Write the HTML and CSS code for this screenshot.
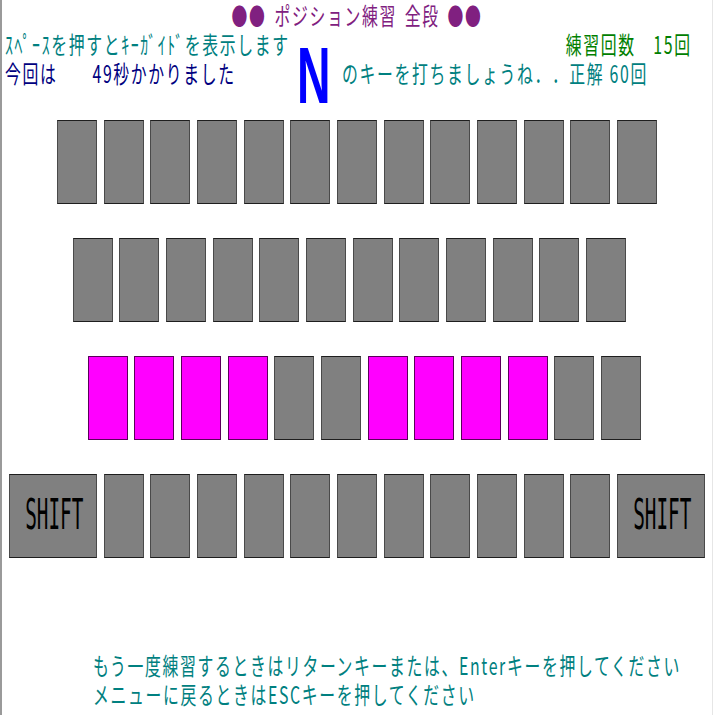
FILE: index.html
```html
<!DOCTYPE html>
<html lang="ja">
<head>
<meta charset="utf-8">
<title>ポジション練習 全段</title>
<link rel="stylesheet" href="styles.css">
</head>
<body>
<div class="screen">
  <header class="top">
    <div class="title"><span class="c mid">●● ポジション練習 全段 ●●</span></div>
    <div class="info">
      <div class="line teal"><span class="c">ｽﾍﾟｰｽを押すとｷｰｶﾞｲﾄﾞを表示します</span></div>
      <div class="bigkey"><span class="n">N</span></div>
      <div class="line green right"><span class="c end">練習回数　15回</span></div>
      <div class="line navy"><span class="c">今回は　　49秒かかりました</span></div>
      <div class="line teal"><span class="c">のキーを打ちましょうね．．正解 60回</span></div>
    </div>
  </header>

  <main class="keyboard">
    <div class="row row1">
      <div class="key"></div><div class="key"></div><div class="key"></div><div class="key"></div><div class="key"></div><div class="key"></div><div class="key"></div><div class="key"></div><div class="key"></div><div class="key"></div><div class="key"></div><div class="key"></div><div class="key"></div>
    </div>
    <div class="row row2">
      <div class="key"></div><div class="key"></div><div class="key"></div><div class="key"></div><div class="key"></div><div class="key"></div><div class="key"></div><div class="key"></div><div class="key"></div><div class="key"></div><div class="key"></div><div class="key"></div>
    </div>
    <div class="row row3">
      <div class="key on"></div><div class="key on"></div><div class="key on"></div><div class="key on"></div><div class="key"></div><div class="key"></div><div class="key on"></div><div class="key on"></div><div class="key on"></div><div class="key on"></div><div class="key"></div><div class="key"></div>
    </div>
    <div class="row row4">
      <div class="key shift"><span class="shift-label">SHIFT</span></div>
      <div class="key"></div><div class="key"></div><div class="key"></div><div class="key"></div><div class="key"></div><div class="key"></div><div class="key"></div><div class="key"></div><div class="key"></div><div class="key"></div><div class="key"></div>
      <div class="key shift"><span class="shift-label">SHIFT</span></div>
    </div>
  </main>

  <footer class="bottom">
    <div class="line teal"><span class="c">もう一度練習するときはリターンキーまたは、Enterキーを押してください</span></div>
    <div class="line teal"><span class="c">メニューに戻るときはESCキーを押してください</span></div>
  </footer>
</div>
</body>
</html>
```

FILE: styles.css
```css
html, body {
  margin: 0;
  padding: 0;
  background: #ffffff;
}

body {
  font-family: "Noto Sans CJK JP", "Noto Sans", sans-serif;
  font-size: 24px;
  text-spacing-trim: space-all;
}

.screen {
  width: 710px;
  height: 715px;
  border-left: 2px solid #9a9a9a;
  border-right: 1px solid #e6e6e6;
  box-sizing: content-box;
  overflow-x: clip;
}

.c {
  display: inline-block;
  white-space: nowrap;
  letter-spacing: 2.5px;
  text-spacing-trim: space-all;
  transform: scaleX(0.66);
  transform-origin: 0 50%;
}

.c.mid {
  transform-origin: 50% 50%;
  word-spacing: 4px;
}

.c.end {
  transform-origin: 100% 50%;
}

.line {
  height: 29px;
  line-height: 29px;
  white-space: nowrap;
}

.right {
  text-align: right;
}

.teal { color: #008080; }
.navy { color: #000080; }
.green { color: #008000; }

.title {
  height: 29px;
  line-height: 29px;
  text-align: center;
  color: #802080;
}

.info {
  display: grid;
  grid-template-columns: 293px 44px 350px;
  grid-template-rows: 29px 29px;
  padding-left: 3px;
}

.bigkey {
  grid-column: 2;
  grid-row: 1 / span 2;
  height: 58px;
  overflow: visible;
}

.n {
  display: block;
  font-family: "Liberation Sans", Arial, sans-serif;
  font-weight: bold;
  font-size: 80px;
  line-height: 80px;
  color: #0000ff;
  margin-top: 7px;
  margin-left: -1px;
  transform: scaleX(0.58);
  transform-origin: 0 50%;
}

.keyboard {
  margin-top: 33px;
  display: flex;
  flex-direction: column;
  gap: 34px;
}

.row {
  display: flex;
  gap: 6.67px;
  height: 84px;
}

.row1 { padding-left: 55px; }
.row2 { padding-left: 70.7px; }
.row3 { padding-left: 85.7px; }
.row4 { padding-left: 7px; }

.key {
  width: 40px;
  height: 84px;
  box-sizing: border-box;
  background: #808080;
  border: 1px solid #1e1e1e;
  border-left-color: #4a4a4a;
  border-right-color: #4a4a4a;
}

.key.on {
  background: #ff00ff;
  border-color: #5a005a;
}

.key.shift {
  width: 88px;
  display: flex;
  align-items: center;
  justify-content: center;
}

.shift-label {
  display: inline-block;
  font-family: "DejaVu Sans Mono", "Liberation Mono", monospace;
  font-size: 42px;
  line-height: 42px;
  color: #000000;
  transform: scaleX(0.46);
  margin-top: -3px;
  margin-left: 2px;
}

.bottom {
  margin-top: 92px;
  padding-left: 91px;
}
```
